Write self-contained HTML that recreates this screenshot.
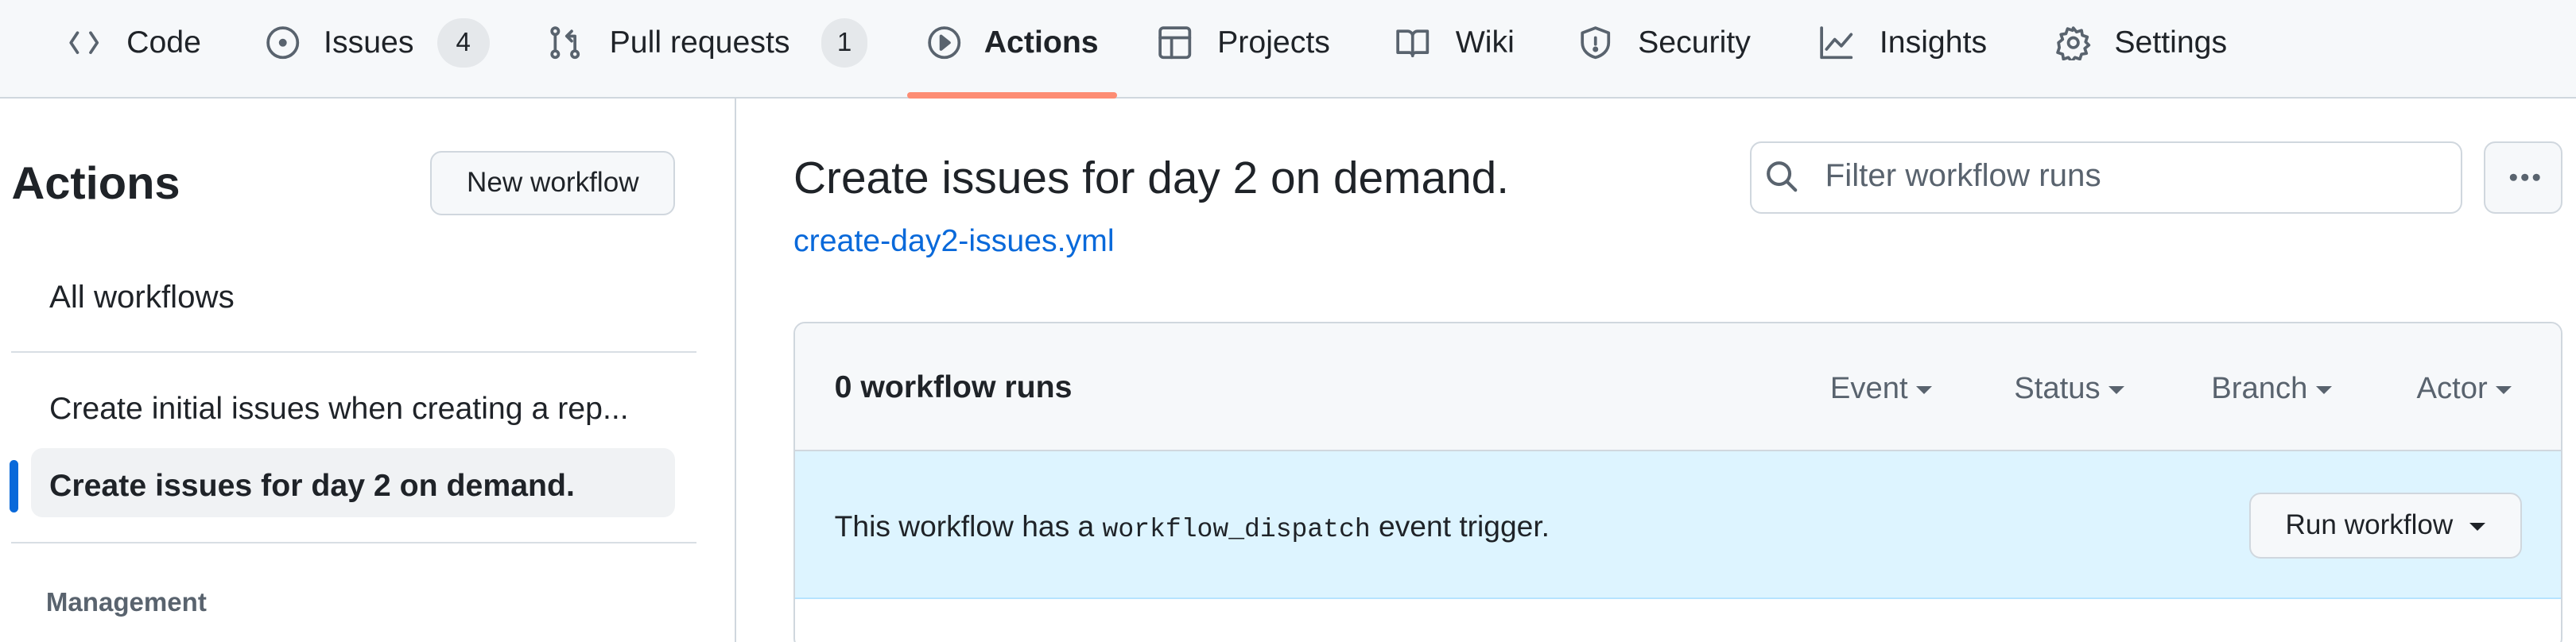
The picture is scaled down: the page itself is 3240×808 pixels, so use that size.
<!DOCTYPE html>
<html><head><meta charset="utf-8"><style>
*{box-sizing:border-box;margin:0;padding:0}
html,body{width:3240px;height:808px;overflow:hidden;background:#fff}
#r{zoom:2.0663;width:1568px;height:391px;position:relative;font-family:"Liberation Sans",sans-serif;color:#1f2328}
.a{position:absolute;white-space:nowrap}
.nav{position:absolute;left:0;top:0;width:1568px;height:60px;background:#f6f8fa;border-bottom:1px solid #d0d7de}
.ni{position:absolute;top:14px;font-size:19px;line-height:24px}
.ic{position:absolute;top:15px;width:22px;height:22px}
.bd{position:absolute;top:11px;height:30px;border-radius:15px;background:#e5e8eb;font-size:16px;line-height:30px;text-align:center}
svg{fill:none;stroke:#59636e;stroke-width:1.8;stroke-linecap:round;stroke-linejoin:round}
.btn{position:absolute;border:1px solid #d0d7de;border-radius:7px;background:#f6f8fa;font-size:17px;text-align:center}
.flt{position:absolute;top:226px;font-size:18.5px;color:#59636e}
.car{display:inline-block;width:0;height:0;border-left:5px solid transparent;border-right:5px solid transparent;border-top:5px solid #59636e;vertical-align:middle;margin-left:5px}
</style></head><body><div id="r">
<div class="nav">
<svg class="ic" style="left:40px" viewBox="0 0 22 22"><path d="M7 5 3 11l4 6M15 5l4 6-4 6"/></svg>
<div class="ni" style="left:77px">Code</div>
<svg class="ic" style="left:161px" viewBox="0 0 22 22"><circle cx="11" cy="11" r="9"/><circle cx="11" cy="11" r="1.5" fill="#59636e"/></svg>
<div class="ni" style="left:197px">Issues</div>
<div class="bd" style="left:266px;width:32px">4</div>
<svg class="ic" style="left:333px" viewBox="0 0 22 22"><circle cx="5" cy="4" r="2"/><circle cx="5" cy="18" r="2"/><circle cx="17" cy="18" r="2"/><path d="M5 6v10M17 16V7h-4M15 4l-3 3 3 3"/></svg>
<div class="ni" style="left:371px">Pull requests</div>
<div class="bd" style="left:500px;width:28px">1</div>
<svg class="ic" style="left:564px" viewBox="0 0 22 22"><circle cx="11" cy="11" r="9"/><path d="M9 7v8l5-4z" fill="#59636e"/></svg>
<div class="ni" style="left:599px;font-weight:bold">Actions</div>
<div class="a" style="left:552px;top:56px;width:128px;height:4px;background:#fd8c73;border-radius:2px"></div>
<svg class="ic" style="left:704px" viewBox="0 0 22 22"><rect x="2" y="2" width="18" height="18" rx="2"/><path d="M2 8h18M9 8v12"/></svg>
<div class="ni" style="left:741px">Projects</div>
<svg class="ic" style="left:849px" viewBox="0 0 22 22"><path d="M2 4h6a3 3 0 0 1 3 3v12a2 2 0 0 0-2-2H2zM20 4h-6a3 3 0 0 0-3 3v12a2 2 0 0 1 2-2h7z"/></svg>
<div class="ni" style="left:886px">Wiki</div>
<svg class="ic" style="left:960px" viewBox="0 0 22 22"><path d="M11 2 3 5v6c0 5 4 8 8 9 4-1 8-4 8-9V5z"/><path d="M11 8v4"/><circle cx="11" cy="15" r=".8" fill="#59636e"/></svg>
<div class="ni" style="left:997px">Security</div>
<svg class="ic" style="left:1107px" viewBox="0 0 22 22"><path d="M2 2v18h18M5 15l5-6 4 4 6-7"/></svg>
<div class="ni" style="left:1144px">Insights</div>
<svg class="ic" style="left:1251px" viewBox="0 0 22 22"><circle cx="11" cy="11" r="3"/><path d="M11 2l2 2.5 3-1 .5 3 3 1-1 3 2 2-2.5 2 1 3-3 .5-1 3-3-1-2 2.5-2-2.5-3 1-.5-3-3-1 1-3L2 11l2.5-2-1-3 3-.5 1-3 3 1z"/></svg>
<div class="ni" style="left:1287px">Settings</div>
</div>
<div class="a" style="left:447px;top:60px;width:1px;height:331px;background:#d0d7de"></div>
<div class="a" style="left:7px;top:96px;font-size:28px;font-weight:bold">Actions</div>
<div class="btn" style="left:262px;top:92px;width:149px;height:39px;line-height:37px">New workflow</div>
<div class="a" style="left:30px;top:170px;font-size:19.5px">All workflows</div>
<div class="a" style="left:7px;top:214px;width:417px;height:1px;background:#d8dee4"></div>
<div class="a" style="left:30px;top:238px;font-size:19px">Create initial issues when creating a rep...</div>
<div class="a" style="left:19px;top:273px;width:392px;height:42px;background:#f0f2f4;border-radius:7px"></div>
<div class="a" style="left:6px;top:280px;width:5px;height:32px;background:#0969da;border-radius:3px"></div>
<div class="a" style="left:30px;top:285px;font-size:19px;font-weight:bold">Create issues for day 2 on demand.</div>
<div class="a" style="left:7px;top:330px;width:417px;height:1px;background:#d8dee4"></div>
<div class="a" style="left:28px;top:358px;font-size:16px;font-weight:bold;color:#59636e">Management</div>
<div class="a" style="left:483px;top:93px;font-size:27.5px">Create issues for day 2 on demand.</div>
<div class="a" style="left:483px;top:136px;font-size:19px;color:#0969da">create-day2-issues.yml</div>
<div class="a" style="left:1065px;top:86px;width:434px;height:44px;border:1px solid #d0d7de;border-radius:7px;background:#fff"></div>
<svg class="a" style="left:1074px;top:97px;width:22px;height:22px;stroke:#59636e;stroke-width:2" viewBox="0 0 22 22"><circle cx="9" cy="9" r="6.5"/><path d="m14 14 5 5"/></svg>
<div class="a" style="left:1111px;top:96px;font-size:19.5px;color:#59636e">Filter workflow runs</div>
<div class="btn" style="left:1512px;top:86px;width:48px;height:44px;background:#f6f8fa"><svg style="position:absolute;left:13px;top:17px;width:22px;height:8px;stroke:none;fill:#59636e" viewBox="0 0 22 8"><circle cx="4" cy="4" r="2.2"/><circle cx="11" cy="4" r="2.2"/><circle cx="18" cy="4" r="2.2"/></svg></div>
<div class="a" style="left:483px;top:196px;width:1077px;height:200px;border:1px solid #d0d7de;border-radius:7px;overflow:hidden">
<div style="height:78px;background:#f6f8fa;border-bottom:1px solid #d0d7de"></div>
<div style="height:90px;background:#ddf4ff;border-bottom:1px solid #b6e3ff"></div>
</div>
<div class="a" style="left:508px;top:225px;font-size:19px;font-weight:bold">0 workflow runs</div>
<div class="flt" style="left:1114px">Event<span class="car"></span></div>
<div class="flt" style="left:1226px">Status<span class="car"></span></div>
<div class="flt" style="left:1346px">Branch<span class="car"></span></div>
<div class="flt" style="left:1471px">Actor<span class="car"></span></div>
<div class="a" style="left:508px;top:310px;font-size:18px">This workflow has a <span style="font-family:'Liberation Mono',monospace;font-size:16px">workflow_dispatch</span> event trigger.</div>
<div class="btn" style="left:1369px;top:300px;width:166px;height:40px;line-height:38px;background:#f6f8fa">Run workflow<span class="car" style="margin-left:10px;border-top-color:#1f2328"></span></div>
</div></body></html>
